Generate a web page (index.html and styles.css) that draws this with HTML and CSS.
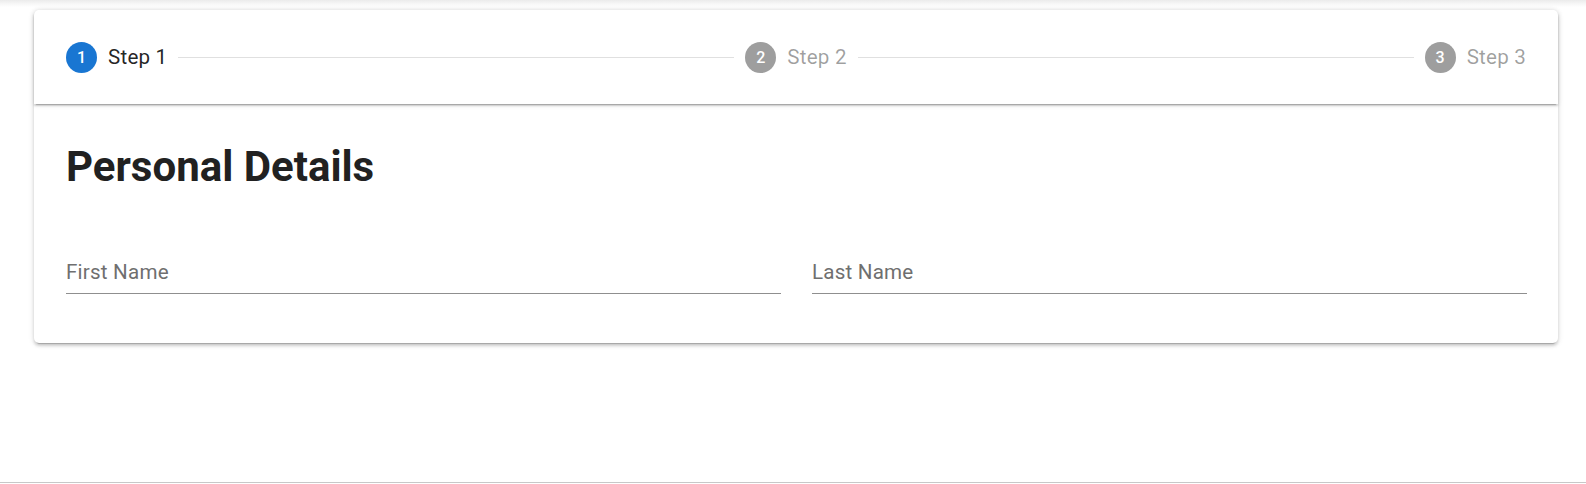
FILE: index.html
```html
<!DOCTYPE html>
<html lang="en">
<head>
<meta charset="utf-8">
<title>Stepper</title>
<link rel="stylesheet" href="styles.css">
</head>
<body>
<div class="page">
  <div class="top-shade"></div>
  <div class="stepper">
    <div class="stepper-header">
      <div class="step active">
        <span class="step-circle">1</span>
        <span class="step-label">Step 1</span>
      </div>
      <div class="divider"></div>
      <div class="step">
        <span class="step-circle">2</span>
        <span class="step-label">Step 2</span>
      </div>
      <div class="divider"></div>
      <div class="step">
        <span class="step-circle">3</span>
        <span class="step-label">Step 3</span>
      </div>
    </div>
    <div class="stepper-content">
      <h2 class="title">Personal Details</h2>
      <div class="fields">
        <div class="field"><span class="field-label">First Name</span></div>
        <div class="field"><span class="field-label">Last Name</span></div>
      </div>
    </div>
  </div>
  <div class="bottom-line"></div>
</div>
</body>
</html>
```

FILE: styles.css
```css
html, body {
  margin: 0;
  padding: 0;
  background: #ffffff;
  font-family: Roboto, "Liberation Sans", Arial, sans-serif;
}

.page {
  height: 484px;
  display: flex;
  flex-direction: column;
  overflow: hidden;
}

.top-shade {
  height: 7px;
  margin-bottom: 3px;
  background: linear-gradient(to bottom, #ebebeb, #f6f6f6 50%, #ffffff);
  flex: none;
}

.stepper {
  margin: 0 28px 0 34px;
  background: #ffffff;
  border-radius: 5px;
  box-shadow: 0 4px 1px -3px rgba(0,0,0,.2), 0 3px 3px 0 rgba(0,0,0,.14), 0 1px 6px 0 rgba(0,0,0,.12);
  flex: none;
}

.stepper-header {
  height: 94px;
  box-sizing: border-box;
  padding: 0 32px;
  display: flex;
  align-items: center;
  gap: 11px;
  border-radius: 5px 5px 0 0;
  box-shadow: 0 3px 1px -2px rgba(0,0,0,.2), 0 2px 2px 0 rgba(0,0,0,.14), 0 1px 5px 0 rgba(0,0,0,.12);
  position: relative;
}

.step {
  display: flex;
  align-items: center;
  gap: 11px;
  flex: none;
}

.step-circle {
  width: 31px;
  height: 31px;
  border-radius: 50%;
  background: #9e9e9e;
  color: #ffffff;
  font-size: 16px;
  font-weight: 500;
  display: flex;
  align-items: center;
  justify-content: center;
}

.step.active .step-circle {
  background: #1976d2;
}

.step-label {
  font-size: 20.6px;
  color: rgba(0,0,0,.38);
  letter-spacing: 0.01em;
}

.step.active .step-label {
  color: rgba(0,0,0,.87);
}

.divider {
  flex: 1;
  height: 1px;
  background: #e0e0e0;
}

.stepper-content {
  padding: 38px 31px 49px 32px;
}

.title {
  margin: 0;
  font-size: 42px;
  line-height: 50px;
  font-weight: 700;
  color: #212121;
  letter-spacing: 0;
}

.fields {
  display: flex;
  gap: 31px;
  margin-top: 68px;
}

.field {
  flex: 1;
  padding-bottom: 9px;
  border-bottom: 1px solid #8f8f8f;
}

.field-label {
  display: block;
  font-size: 20.6px;
  line-height: 24px;
  color: #6f6f6f;
  letter-spacing: 0.01em;
}

.bottom-line {
  margin-top: auto;
  margin-bottom: 1px;
  height: 1px;
  background: #c8c8c8;
  flex: none;
}
```
